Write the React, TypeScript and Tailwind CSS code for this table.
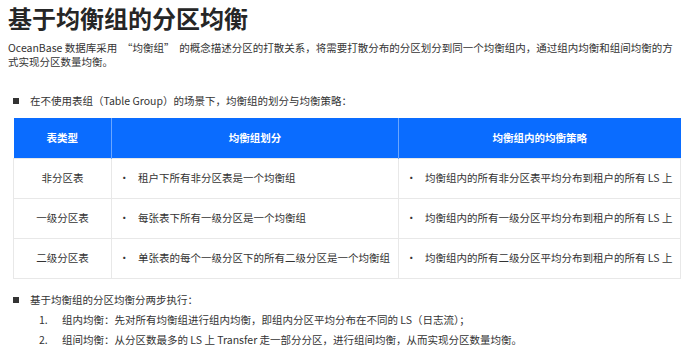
import React from "react";

const rows = [
  ["非分区表", "租户下所有非分区表是一个均衡组", "均衡组内的所有非分区表平均分布到租户的所有 LS 上"],
  ["一级分区表", "每张表下所有一级分区是一个均衡组", "均衡组内的所有一级分区平均分布到租户的所有 LS 上"],
  ["二级分区表", "单张表的每个一级分区下的所有二级分区是一个均衡组", "均衡组内的所有二级分区平均分布到租户的所有 LS 上"],
];

export default function App() {
  return (
    <div
      className="w-[690px] h-[350px] bg-white overflow-hidden text-[#333] pl-[8px]"
      style={{ fontFamily: '"Noto Sans CJK SC", "Noto Sans", sans-serif' }}
    >
      <h1 className="text-[24px] leading-[36px] font-bold text-[#262626]">基于均衡组的分区均衡</h1>
      <p className="mt-[5px] text-[10.5px] leading-[14px] pr-[12px]">
        OceanBase 数据库采用 &nbsp;“均衡组” &nbsp;的概念描述分区的打散关系，将需要打散分布的分区划分到同一个均衡组内，通过组内均衡和组间均衡的方式实现分区数量均衡。
      </p>
      <div className="mt-[25px] flex items-center text-[10.5px] leading-[14px]">
        <span className="ml-[5px] w-[6px] h-[6px] bg-[#333]" />
        <span className="ml-[11px]">在不使用表组（Table Group）的场景下，均衡组的划分与均衡策略：</span>
      </div>
      <table className="mt-[10px] ml-[5px] w-[667px] table-fixed border-collapse text-[10.5px]">
        <colgroup>
          <col className="w-[98px]" />
          <col className="w-[287px]" />
          <col className="w-[282px]" />
        </colgroup>
        <thead>
          <tr className="h-[40px] bg-[#0a6cff] text-white font-bold">
            <th className="border-r border-[#6aa6ff] font-bold">表类型</th>
            <th className="border-r border-[#6aa6ff] font-bold">均衡组划分</th>
            <th className="font-bold">均衡组内的均衡策略</th>
          </tr>
        </thead>
        <tbody>
          {rows.map((r) => (
            <tr key={r[0]} className="h-[40px]">
              <td className="border border-[#e8e8e8] text-center">{r[0]}</td>
              <td className="border border-[#e8e8e8] pl-[7px] whitespace-nowrap">
                <div className="flex items-center">
                  <span className="w-[19px]">•</span>
                  <span>{r[1]}</span>
                </div>
              </td>
              <td className="border border-[#e8e8e8] pl-[7px] whitespace-nowrap">
                <div className="flex items-center">
                  <span className="w-[19px]">•</span>
                  <span>{r[2]}</span>
                </div>
              </td>
            </tr>
          ))}
        </tbody>
      </table>
      <div className="mt-[11px] flex items-center text-[10.5px] leading-[20px]">
        <span className="ml-[5px] w-[6px] h-[6px] bg-[#333]" />
        <span className="ml-[11px]">基于均衡组的分区均衡分两步执行：</span>
      </div>
      <div className="flex text-[10.5px] leading-[20px]">
        <span className="ml-[31px] w-[23px]">1.</span>
        <span>组内均衡：先对所有均衡组进行组内均衡，即组内分区平均分布在不同的 LS（日志流）；</span>
      </div>
      <div className="flex text-[10.5px] leading-[20px]">
        <span className="ml-[31px] w-[23px]">2.</span>
        <span>组间均衡：从分区数最多的 LS 上 Transfer 走一部分分区，进行组间均衡，从而实现分区数量均衡。</span>
      </div>
    </div>
  );
}
